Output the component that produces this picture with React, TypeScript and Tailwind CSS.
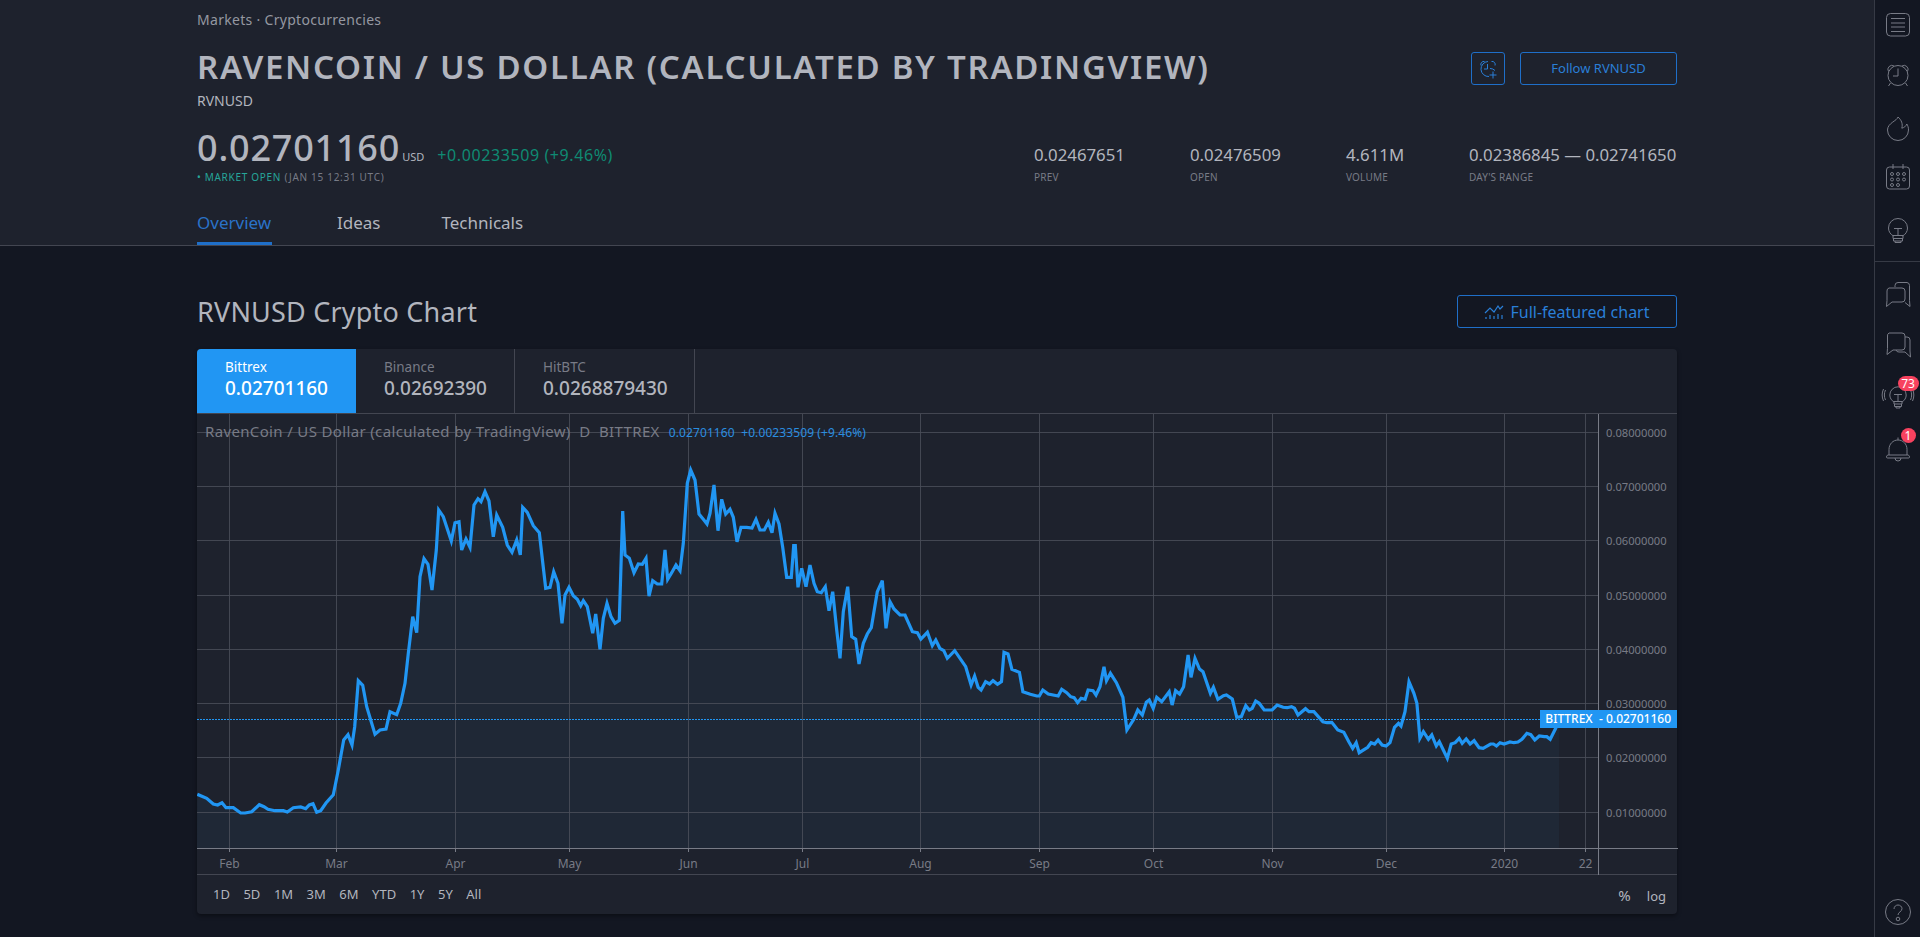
import React from "react";

const z8: number[][] = [[22,1063],[50,1075],[70,1092],[83,1095],[96,1088],[108,1103],[130,1103],[152,1119],[165,1119],[185,1115],[208,1094],[222,1100],[234,1108],[255,1112],[280,1112],[292,1116],[310,1103],[332,1101],[347,1106],[358,1095],[369,1091],[380,1117],[392,1112],[408,1089],[430,1064],[445,990],[461,900],[474,884],[486,915],[494,860],[505,722],[518,736],[530,800],[555,883],[570,870],[588,867],[600,815],[620,824],[632,790],[645,730],[655,640],[668,530],[680,578],[690,410],[702,356],[714,373],[726,450],[739,330],[746,210],[760,230],[784,303],[795,248],[807,245],[815,330],[828,297],[840,322],[852,195],[864,176],[873,185],[885,155],[897,183],[910,290],[920,225],[938,262],[952,315],[966,337],[980,300],[991,345],[998,202],[1012,217],[1030,257],[1048,278],[1067,445],[1080,442],[1091,395],[1104,430],[1116,550],[1125,465],[1137,442],[1150,467],[1162,478],[1172,497]];
const z9: number[][] = [[10,482],[22,500],[38,580],[47,522],[60,628],[70,535],[81,490],[93,530],[105,550],[118,541],[128,213],[135,345],[148,355],[162,398],[175,372],[187,373],[198,355],[207,468],[218,422],[232,432],[245,432],[255,330],[263,418],[275,398],[288,375],[300,392],[310,310],[322,130],[332,90],[345,120],[357,222],[370,238],[381,252],[390,220],[402,135],[414,272],[425,178],[437,222],[450,208],[460,232],[471,305],[483,262],[500,262],[516,264],[528,238],[540,270],[553,270],[565,247],[576,278],[585,220],[597,252],[608,322],[620,412],[634,412],[641,317],[646,317],[654,442],[665,385],[678,440],[690,375],[702,430],[712,455],[724,458],[736,440],[747,512],[758,455],[770,570],[780,655],[790,515],[803,440],[815,590],[827,598],[837,672],[850,610],[862,582],[874,563],[892,455],[907,422],[918,565],[930,485],[942,507]];
const z7: number[][] = [[0,525],[10,525],[25,575],[35,578],[42,597],[55,577],[65,617],[72,600],[80,625],[88,632],[95,655],[110,632],[132,680],[143,735],[150,708],[157,742],[163,750],[172,725],[180,732],[187,722],[196,733],[204,725],[209,637],[217,642],[225,688],[240,697],[247,755],[262,763],[275,768],[280,768],[287,750],[298,762],[318,768],[325,748],[335,758],[343,770],[350,773],[357,788],[364,775],[372,778],[378,750],[388,752],[394,765],[402,740],[410,680],[415,722],[423,700],[435,728],[448,772],[456,870],[470,838],[478,810],[487,825],[495,787],[501,780],[509,805],[516,772],[526,785],[541,755],[547,795],[554,752],[562,762],[570,740],[579,645],[585,712],[593,655],[602,687],[609,695],[624,760],[630,742],[639,778],[650,767],[656,765],[668,777],[677,832],[686,830],[695,797],[702,810],[708,805],[715,783],[722,790],[732,810],[748,810],[758,795],[770,802],[778,803],[787,800],[793,805],[800,825],[815,806],[822,815],[832,815],[850,845],[858,848],[868,847],[880,870],[892,877],[902,905],[910,925],[917,908],[923,938],[940,922],[947,908],[954,912],[961,900],[969,915],[977,918],[985,908],[994,862],[1002,850],[1007,858],[1015,815],[1023,725],[1033,760],[1039,790],[1045,895],[1052,875],[1062,898],[1069,885],[1078,918],[1084,905],[1100,955],[1108,912],[1116,908],[1124,895],[1130,910],[1138,897],[1146,912],[1154,902],[1164,923],[1172,925],[1187,912],[1193,912],[1199,918],[1206,908],[1214,912],[1226,906],[1234,908],[1242,906],[1250,898],[1260,880],[1268,884],[1276,900],[1285,888],[1295,890],[1300,890],[1307,898],[1318,865],[1325,840]];

const pts: number[][] = [
  ...z8.map(([x, y]) => [190 + x / 3, 440 + y / 3]),
  ...z9.map(([x, y]) => [580 + x / 3, 440 + y / 3]),
  ...z7.map(([x, y]) => [900 + x / 2.01, 440 + y / 3]),
];
const line = pts.map(([x, y]) => `${x.toFixed(1)},${y.toFixed(1)}`).join(" ");
const area = `197,848 ${line} 1559,848`;

const hLines = [432, 486, 540, 595, 649, 703, 757, 812];
const prices = ["0.08000000", "0.07000000", "0.06000000", "0.05000000", "0.04000000", "0.03000000", "0.02000000", "0.01000000"];
const vLines: [number, string][] = [[229, "Feb"], [336, "Mar"], [455, "Apr"], [569, "May"], [688, "Jun"], [802, "Jul"], [920, "Aug"], [1039, "Sep"], [1153, "Oct"], [1272, "Nov"], [1386, "Dec"], [1504, "2020"], [1585, "22"]];

function Ic({ children, className = "" }: { children: React.ReactNode; className?: string }) {
  return (
    <svg width="28" height="28" viewBox="0 0 28 28" fill="none" stroke="#787b86" strokeWidth="1" className={`overflow-visible ${className}`}>
      {children}
    </svg>
  );
}

function Sidebar() {
  return (
    <aside className="w-[46px] shrink-0 h-full border-l border-[#363a45] bg-[#131722] flex flex-col items-center">
      <Ic className="mt-[11px]">
        <rect x="2.5" y="2.5" width="23" height="22.5" rx="4" />
        <path d="M7 7.5h14M7 12h14M7 16h14M7 20.5h14" />
      </Ic>
      <Ic className="mt-[22px]">
        <circle cx="14" cy="14.5" r="10" />
        <path d="M14 7.5v7.5H9" />
        <path d="M4.5 10.5a4 4 0 0 1 5.5-5.5M23.5 10.5a4 4 0 0 0-5.5-5.5M6.5 22l-2 3M21.5 22l2 3" />
      </Ic>
      <Ic className="mt-[25px]">
        <path d="M14 3C13 7 3.5 9 3.5 16a10.5 10.5 0 0 0 21 0c0-2.5-.7-4.500-1.700-6-1 2.500-2.800 3.600-5 4.200C19 10 17.500 6 14 3z" />
      </Ic>
      <Ic className="mt-[21px]">
        <rect x="2.500" y="4" width="23" height="22" rx="3" />
        <path d="M9 1v5M19 1v5" />
        <circle cx="8" cy="11" r="1.500" /><circle cx="14" cy="11" r="1.500" /><circle cx="20" cy="11" r="1.500" />
        <circle cx="8" cy="16.500" r="1.500" /><circle cx="14" cy="16.500" r="1.500" /><circle cx="20" cy="16.500" r="1.500" />
        <circle cx="8" cy="22" r="1.500" /><circle cx="14" cy="22" r="1.500" />
      </Ic>
      <Ic className="mt-[25px]">
        <path d="M9.500 20c-3-1.500-5-4.500-5-8a9.500 9.500 0 0 1 19 0c0 3.500-2 6.500-5 8" />
        <path d="M10 12.500h8M14 12.500V19M9 19.500h10v3H9zM9.500 22.500v2.500h9v-2.500M11 25v1.500h6V25" />
      </Ic>
      <div className="w-full border-t border-[#363a45] mt-[17px]" />
      <Ic className="mt-[18px]">
        <path d="M11 7V5.500a3 3 0 0 1 3-3h9a3 3 0 0 1 2.500 3v15l.5 6-5-4" />
        <path d="M5 8h13a3 3 0 0 1 3 3v8a3 3 0 0 1-3 3H8l-5.500 4.500.5-6V11a3 3 0 0 1 2-3z" />
      </Ic>
      <Ic className="mt-[22px]">
        <path d="M5 3h13a3 3 0 0 1 3 3v11a3 3 0 0 1-3 3H9l-6 4.500.5-6V6A3 3 0 0 1 5 3z" />
        <path d="M21 7h2a3 3 0 0 1 3 3v11l.5 6-5.500-5h-6a3 3 0 0 1-3-2" />
      </Ic>
      <div className="relative mt-[24px] h-[28px]">
        <Ic>
          <path d="M10 20c-2.500-1.500-4.200-4-4.200-7a8.200 8.200 0 0 1 16.400 0c0 3-1.700 5.500-4.200 7" />
          <path d="M10 12.500h8M14 12.500V19M10 19.500h8v2.500h-8zM10.500 22v2.500h7V22M12 24.500V26h4v-1.500" />
          <path d="M1.500 8c-1.500 3-1.500 7 0 10M-.5 7c-1.800 4-1.800 8 0 12M26.500 8c1.500 3 1.500 7 0 10M28.500 7c1.800 4 1.800 8 0 12" />
        </Ic>
        <span className="absolute left-[14px] top-[-6px] w-[21px] h-[15px] rounded-full bg-[#f7425f] text-white text-[12px] leading-[15px] text-center">73</span>
      </div>
      <div className="relative mt-[24px] h-[28px]">
        <Ic>
          <path d="M5 21v-5.500C5 10 9 6 14 6s9 4 9 9.500V21" />
          <path d="M14 3.500V6M2.500 23a2 2 0 0 1 2.500-2h18a2 2 0 0 1 2.500 2 1 1 0 0 1-1 1H3.500a1 1 0 0 1-1-1zM11 24a3 3 0 0 0 6 0" />
        </Ic>
        <span className="absolute left-[17px] top-[-6px] w-[15px] h-[15px] rounded-full bg-[#f7425f] text-white text-[12px] leading-[15px] text-center">1</span>
      </div>
      <div className="mt-auto mb-[11px]">
        <Ic>
          <circle cx="14" cy="14" r="12.500" />
          <path d="M10 11c0-2.500 2-4 4-4s4 1.500 4 3.700c0 3-4 3.300-4 6.300" />
          <circle cx="14" cy="21" r="1.800" />
        </Ic>
      </div>
    </aside>
  );
}

function Stat({ v, l }: { v: string; l: string }) {
  return (
    <div className="flex flex-col">
      <span className="text-[16.800px] leading-[20px] text-[#b2b5be] whitespace-nowrap">{v}</span>
      <span className="text-[10px] leading-[14px] mt-[5px] text-[#787b86] tracking-[0.2px]">{l}</span>
    </div>
  );
}

function Header() {
  return (
    <header className="h-[246px] shrink-0 bg-[#1e222d] border-b border-[#434651] px-[197px]">
      <div className="pt-[10px] h-[30px] text-[14px] leading-[20px] text-[#9598a1] tracking-[0.3px]">Markets · Cryptocurrencies</div>
      <div className="mt-[12px] h-[49px] flex justify-between items-start">
        <h1 className="text-[33px] leading-[50px] font-semibold text-[#b2b5be] tracking-[1.700px] whitespace-nowrap">RAVENCOIN / US DOLLAR (CALCULATED BY TRADINGVIEW)</h1>
        <div className="flex gap-[15px] mt-[10px]">
          <button className="w-[34px] h-[33px] border border-[#1f6fc9] rounded-[3px] flex items-center justify-center">
            <svg width="22" height="22" viewBox="0 0 22 22" fill="none" stroke="#2a7fd8" strokeWidth="1">
              <path d="M11 3.500a7.500 7.500 0 1 0 1 15M10.500 6v5H7" />
              <path d="M4 7.500a3 3 0 0 1 3.500-4M18 7.500a3 3 0 0 0-3.500-4M13 10.500a7 7 0 0 1 5 2" />
              <path d="M16 13.500v7M12.500 17h7" />
            </svg>
          </button>
          <button className="w-[157px] h-[33px] border border-[#1f6fc9] rounded-[3px] text-[13px] text-[#2a7fd8]">Follow RVNUSD</button>
        </div>
      </div>
      <div className="h-[20px] text-[14px] leading-[20px] text-[#b2b5be]">RVNUSD</div>
      <div className="flex justify-between">
        <div>
          <div className="mt-[15px] h-[44px] flex items-baseline">
            <span className="text-[36px] leading-[44px] font-medium text-[#b2b5be] tracking-[0.8px]">0.02701160</span>
            <span className="text-[11px] text-[#b2b5be] ml-[2px]">USD</span>
            <span className="text-[16px] text-[#0f8a73] ml-[13px] tracking-[0.6px]">+0.00233509 (+9.46%)</span>
          </div>
          <div className="mt-[1px] h-[12px] text-[10px] leading-[12px] text-[#787b86] tracking-[0.7px]">
            <span className="text-[#26a69a]">• MARKET OPEN</span> (JAN 15 12:31 UTC)
          </div>
        </div>
        <div className="flex mt-[34px] h-[38px]">
          <div className="w-[156px]"><Stat v="0.02467651" l="PREV" /></div>
          <div className="w-[156px]"><Stat v="0.02476509" l="OPEN" /></div>
          <div className="w-[123px]"><Stat v="4.611M" l="VOLUME" /></div>
          <div className="w-[208px]"><Stat v="0.02386845 — 0.02741650" l="DAY'S RANGE" /></div>
        </div>
      </div>
      <nav className="mt-[22px] h-[40px] flex text-[17px]">
        <span className="w-[75px] h-[40px] border-b-[3px] border-[#1f6fc9] text-[#2a72c8] leading-[36px]">Overview</span>
        <span className="ml-[65px] text-[#b2b5be] leading-[36px]">Ideas</span>
        <span className="ml-[61px] text-[#b2b5be] leading-[36px]">Technicals</span>
      </nav>
    </header>
  );
}

function Tab({ name, val, w, active }: { name: string; val: string; w: string; active?: boolean }) {
  return (
    <div className={`${w} h-full pl-[28px] pt-[9px] ${active ? "bg-[#2196f3] rounded-tl-[4px] text-white" : "border-r border-[#434651] text-[#b2b5be]"}`}>
      <div className={`text-[13.500px] leading-[18px] ${active ? "text-white" : "text-[#787b86]"}`}>{name}</div>
      <div className="text-[19px] leading-[24px] font-medium">{val}</div>
    </div>
  );
}

function Chart() {
  return (
    <div className="relative h-[461px] border-b border-[#434651]">
      <svg width="1481" height="461" viewBox="197 414 1481 461" className="block">
        <polygon points={area} fill="#1f2836" />
        {hLines.map((y) => <line key={y} x1="197" x2="1598" y1={y + 0.5} y2={y + 0.5} stroke="#4a4e59" strokeOpacity="0.85" />)}
        {vLines.map(([x]) => <line key={x} x1={x + 0.5} x2={x + 0.5} y1="414" y2="848" stroke="#4a4e59" strokeOpacity="0.85" />)}
        {vLines.map(([x]) => <line key={x} x1={x + 0.5} x2={x + 0.5} y1="848" y2="852" stroke="#787b86" />)}
        <polyline points={line} fill="none" stroke="#2196f3" strokeWidth="3.200" strokeLinejoin="miter" />
        <line x1="197" x2="1540" y1="719.5" y2="719.500" stroke="#2196f3" strokeDasharray="2 1" />
        <line x1="197" x2="1678" y1="848.500" y2="848.500" stroke="#787b86" />
        <line x1="1598.500" x2="1598.500" y1="414" y2="875" stroke="#787b86" />
        {prices.map((p, i) => (
          <text key={p} x="1606" y={hLines[i] + 5} fontSize="11.200" fill="#787b86">{p}</text>
        ))}
        {vLines.map(([x, l]) => (
          <text key={x} x={x + 0.5} y="868" fontSize="12" fill="#787b86" textAnchor="middle">{l}</text>
        ))}
      </svg>
      <div className="absolute left-[8px] top-[7px] flex items-baseline whitespace-nowrap">
        <span className="text-[15px] leading-[20px] text-[#787b86] tracking-[0.35px]">RavenCoin / US Dollar (calculated by TradingView) &nbsp;D &nbsp;BITTREX</span>
        <span className="text-[12px] text-[#2a8ee0] ml-[9px] tracking-[0.1px]">0.02701160 &nbsp;+0.00233509 (+9.46%)</span>
      </div>
      <div className="absolute left-[1343px] right-0 top-[296px] h-[18px] bg-[#2196f3] text-white text-[12px] leading-[18px] flex font-medium">
        <span className="w-[58px] text-center">BITTREX</span>
        <span className="w-[6px] text-center">-</span>
        <span className="pl-[2px]">0.02701160</span>
      </div>
    </div>
  );
}

export default function App() {
  return (
    <div className="flex h-screen overflow-hidden bg-[#131722] [font-family:'Noto_Sans','Liberation_Sans',sans-serif]">
      <div className="flex-1 min-w-0 flex flex-col">
        <Header />
        <main className="px-[197px] pt-[49px]">
          <div className="h-[33px] flex items-center justify-between">
            <h2 className="text-[27px] leading-[33px] text-[#b2b5be] tracking-[0.2px]">RVNUSD Crypto Chart</h2>
            <button className="w-[220px] h-[33px] border border-[#1f6fc9] rounded-[3px] flex items-center justify-center gap-[6px] text-[16px] text-[#2a7fd8]">
              <svg width="20" height="16" viewBox="0 0 20 16" fill="none" stroke="#2a7fd8" strokeWidth="1.200">
                <path d="M1 9l5-5 4 4 4-6 2 3 3-3" />
                <path d="M2 15v-2M6 15v-4M10 15v-3M14 15v-5M18 15v-4" />
              </svg>
              Full-featured chart
            </button>
          </div>
          <section className="mt-[21px] h-[565px] bg-[#1e222d] rounded-[4px] shadow-[0_2px_4px_rgba(0,0,0,0.4)]">
            <div className="h-[65px] flex border-b border-[#434651]">
              <Tab name="Bittrex" val="0.02701160" w="w-[159px]" active />
              <Tab name="Binance" val="0.02692390" w="w-[159px]" />
              <Tab name="HitBTC" val="0.0268879430" w="w-[180px]" />
            </div>
            <Chart />
            <div className="h-[38px] pt-[2px] flex items-center justify-between pl-[16px] pr-[11px] text-[13px] text-[#b2b5be]">
              <div className="flex gap-[13.500px]">
                {["1D", "5D", "1M", "3M", "6M", "YTD", "1Y", "5Y", "All"].map((t) => <span key={t}>{t}</span>)}
              </div>
              <div className="flex gap-[16px] items-baseline">
                <span className="text-[15px]">%</span><span>log</span>
              </div>
            </div>
          </section>
        </main>
      </div>
      <Sidebar />
    </div>
  );
}
